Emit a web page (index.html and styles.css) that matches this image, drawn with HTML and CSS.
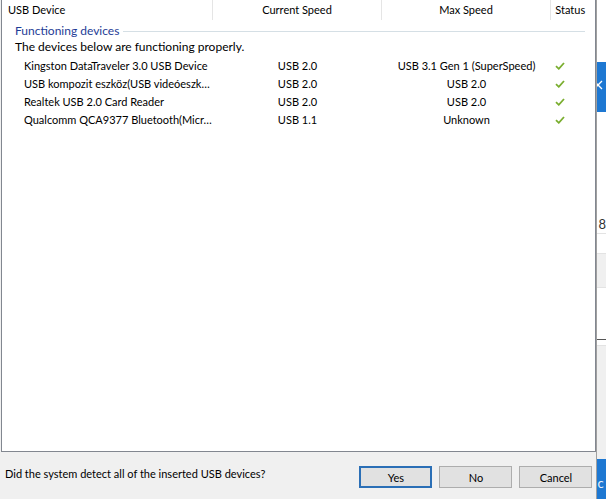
FILE: index.html
```html
<!DOCTYPE html>
<html lang="en">
<head>
  <meta charset="UTF-8">
  <title>USB Devices</title>
  <link rel="stylesheet" href="styles.css">
</head>
<body>
  <div class="desk">
    <div class="dialog">
      <div class="list">
        <div class="cols head">
          <div class="cell first">USB Device</div>
          <div class="cell">Current Speed</div>
          <div class="cell">Max Speed</div>
          <div class="cell last">Status</div>
        </div>

        <div class="group">
          <span class="group-title">Functioning devices</span>
          <span class="group-rule"></span>
        </div>
        <div class="note">The devices below are functioning properly.</div>

        <div class="cols row">
          <div class="cell first">Kingston DataTraveler 3.0 USB Device</div>
          <div class="cell">USB 2.0</div>
          <div class="cell">USB 3.1 Gen 1 (SuperSpeed)</div>
          <div class="cell last"><svg class="tick" viewBox="0 0 10 8"><path d="M1 4.2 L3.8 6.8 L9 1"/></svg></div>
        </div>
        <div class="cols row">
          <div class="cell first">USB kompozit eszköz(USB videóeszk…</div>
          <div class="cell">USB 2.0</div>
          <div class="cell">USB 2.0</div>
          <div class="cell last"><svg class="tick" viewBox="0 0 10 8"><path d="M1 4.2 L3.8 6.8 L9 1"/></svg></div>
        </div>
        <div class="cols row">
          <div class="cell first">Realtek USB 2.0 Card Reader</div>
          <div class="cell">USB 2.0</div>
          <div class="cell">USB 2.0</div>
          <div class="cell last"><svg class="tick" viewBox="0 0 10 8"><path d="M1 4.2 L3.8 6.8 L9 1"/></svg></div>
        </div>
        <div class="cols row">
          <div class="cell first">Qualcomm QCA9377 Bluetooth(Micr…</div>
          <div class="cell">USB 1.1</div>
          <div class="cell">Unknown</div>
          <div class="cell last"><svg class="tick" viewBox="0 0 10 8"><path d="M1 4.2 L3.8 6.8 L9 1"/></svg></div>
        </div>
      </div>

      <div class="footer">
        <div class="question">Did the system detect all of the inserted USB devices?</div>
        <div class="buttons">
          <button class="btn default">Yes</button>
          <button class="btn">No</button>
          <button class="btn">Cancel</button>
        </div>
      </div>
    </div>

    <!-- window behind the dialog, only its left edge shows -->
    <div class="behind">
      <div class="b-gap1"></div>
      <div class="b-close">
        <svg viewBox="0 0 8 50"><path d="M-3 19 L5 27 M5 19 L-3 27"/></svg>
      </div>
      <div class="b-gap2"></div>
      <div class="b-digit">8</div>
      <div class="b-line"></div>
      <div class="b-shade"></div>
      <div class="b-gap3"></div>
      <div class="b-dark"></div>
      <div class="b-fill"></div>
      <div class="b-blue">c</div>
    </div>
  </div>
</body>
</html>
```

FILE: styles.css
```css
html, body {
  margin: 0;
  height: 100%;
  overflow: hidden;
}

body {
  font-family: Lato, "Noto Sans", sans-serif;
  font-size: 11px;
  color: #000;
  background-color: #f0f0f0;
}

.desk {
  display: flex;
  width: 606px;
  height: 499px;
}

.dialog {
  width: 597px;
  display: flex;
  flex-direction: column;
  border-right: 1px solid #a0a0a0;
}

.list {
  margin-left: 1px;
  height: 451px;
  background-color: #fff;
  border-left: 1px solid #828790;
  border-right: 1px solid #828790;
  border-bottom: 1px solid #828790;
}

.cols {
  display: grid;
  grid-template-columns: 211px 169px 169px 1fr;
}

.head {
  height: 20px;
  line-height: 19px;
}

.head .cell {
  text-align: center;
  border-right: 1px solid #e5e5e5;
}

.head .cell.first {
  text-align: left;
  padding-left: 6px;
}

.head .cell.last {
  border-right: none;
  padding-right: 6px;
}

.group {
  display: flex;
  align-items: center;
  height: 21px;
  padding-left: 13px;
  padding-right: 10px;
}

.group-title {
  color: #1e3c96;
  font-size: 12px;
}

.group-rule {
  flex: 1;
  height: 1px;
  margin-left: 4px;
  margin-top: 1px;
  background-color: #d5dfe5;
}

.note {
  height: 12px;
  line-height: 12px;
  padding-left: 13px;
  font-size: 12px;
}

.row {
  height: 18px;
  line-height: 18px;
}

.note + .row {
  margin-top: 4px;
}

.row .cell {
  text-align: center;
  white-space: nowrap;
}

.row .cell.first {
  text-align: left;
  padding-left: 22px;
}

.row .cell.last {
  display: flex;
  justify-content: flex-start;
  align-items: center;
  padding-left: 4px;
}

.tick {
  width: 10px;
  height: 8px;
  fill: none;
  stroke: #7aae2f;
  stroke-width: 1.8;
}

.footer {
  flex: 1;
  display: flex;
  align-items: flex-start;
  justify-content: space-between;
  padding-top: 13px;
}

.question {
  padding-left: 5px;
  padding-top: 2px;
  line-height: 14px;
}

.buttons {
  display: flex;
  gap: 6px;
  padding-top: 1px;
  padding-right: 4px;
}

.btn {
  width: 73px;
  height: 22px;
  padding: 0;
  font-family: inherit;
  font-size: 11px;
  color: #000;
  background-color: #e1e1e1;
  border: 1px solid #adadad;
}

.btn.default {
  border: 2px solid #2b6fb6;
}

.btn + .btn {
  margin-left: 1px;
}

.behind {
  flex: 1;
  display: flex;
  flex-direction: column;
  background-color: #fff;
  font-size: 13px;
}

.b-gap1 { height: 62px; }

.b-close {
  height: 50px;
  background-color: #1e78d2;
}

.b-close svg {
  display: block;
  width: 8px;
  height: 50px;
  stroke: #fff;
  stroke-width: 1.3;
}

.b-gap2 { height: 104px; }

.b-digit {
  height: 17px;
  line-height: 17px;
  text-indent: 1px;
  color: #333;
  overflow: hidden;
  border-bottom: 1px solid #e3e3e3;
}

.b-line {
  height: 19px;
  border-bottom: 1px solid #e3e3e3;
}

.b-shade {
  height: 33px;
  background-color: #f0f0f0;
  border-bottom: 1px solid #e3e3e3;
}

.b-gap3 { height: 51px; }

.b-dark {
  height: 5px;
  border-top: 1px solid #555;
  border-bottom: 1px solid #e3e3e3;
}

.b-fill {
  flex: 1;
  background-color: #f0f0f0;
}

.b-blue {
  height: 40px;
  background-color: #1e78d2;
  color: #e8f0f8;
  line-height: 48px;
  overflow: hidden;
}
```
